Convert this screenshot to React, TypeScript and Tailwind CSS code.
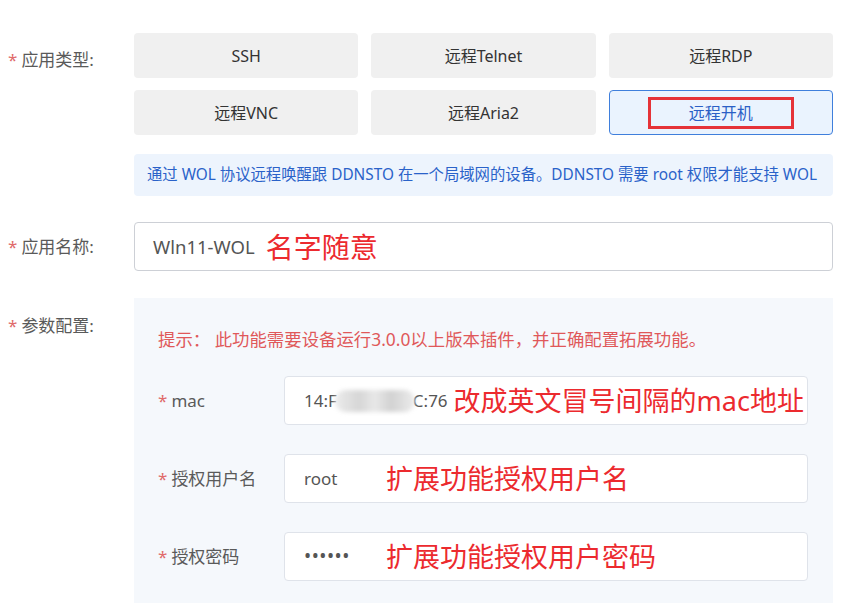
import React from 'react'

const font = { fontFamily: '"Noto Sans", "Noto Sans CJK SC", sans-serif' }

const appTypes = ['SSH', '远程Telnet', '远程RDP', '远程VNC', '远程Aria2', '远程开机']

function Label({ text }: { text: string }) {
  return (
    <span className="text-[17px] text-[#5a5a5a]">
      <span className="text-[#e06a6a] mr-[4px]">*</span>
      {text}
    </span>
  )
}

function Note({ children, className = '' }: { children: React.ReactNode; className?: string }) {
  return <span className={`text-[27px] leading-none text-[#ec2a2e] ${className}`}>{children}</span>
}

function SubRow({ label, children }: { label: string; children: React.ReactNode }) {
  return (
    <div className="flex items-center">
      <div className="w-[150px] pl-[24px] shrink-0">
        <span className="text-[17px] text-[#5a5a5a]">
          <span className="text-[#e06a6a] mr-[4px]">*</span>
          {label}
        </span>
      </div>
      <div className="flex-1 h-[49px] bg-white border border-[#dfe3ea] rounded-[4px] flex items-center pl-[19px] text-[17px] text-[#555]">
        {children}
      </div>
    </div>
  )
}

export default function App() {
  return (
    <div style={font} className="w-[849px] h-[603px] overflow-hidden bg-white pl-[8px] pr-[16px] pt-[33px]">
      {/* 应用类型 */}
      <div className="flex">
        <div className="w-[126px] shrink-0 pt-[14px]">
          <Label text="应用类型:" />
        </div>
        <div className="flex-1">
          <div className="grid grid-cols-3 gap-x-[13px] gap-y-[12px]">
            {appTypes.map((t) =>
              t === '远程开机' ? (
                <div
                  key={t}
                  className="h-[45px] rounded-[4px] border border-[#3f7fdc] bg-[#eaf3fe] flex items-center justify-center"
                >
                  <span className="w-[146px] h-[32px] border-[3px] border-[#e53238] flex items-center justify-center text-[16px] text-[#2b5fc6]">
                    {t}
                  </span>
                </div>
              ) : (
                <div
                  key={t}
                  className="h-[45px] rounded-[4px] bg-[#f0f0f0] flex items-center justify-center text-[16px] text-[#333]"
                >
                  {t}
                </div>
              )
            )}
          </div>
          <div className="mt-[19px] h-[42px] rounded-[4px] bg-[#edf4fd] flex items-center pl-[13px] text-[15.35px] text-[#2a62c9] whitespace-nowrap">
            通过 WOL 协议远程唤醒跟 DDNSTO 在一个局域网的设备。DDNSTO 需要 root 权限才能支持 WOL
          </div>
        </div>
      </div>

      {/* 应用名称 */}
      <div className="flex items-center mt-[26px]">
        <div className="w-[126px] shrink-0">
          <Label text="应用名称:" />
        </div>
        <div className="flex-1 h-[49px] rounded-[4px] border border-[#cdd0d6] flex items-center pl-[18px]">
          <span className="text-[18.5px] text-[#555]">Wln11-WOL</span>
          <Note className="ml-[11px] text-[28px]">名字随意</Note>
        </div>
      </div>

      {/* 参数配置 */}
      <div className="flex mt-[27px]">
        <div className="w-[126px] shrink-0 pt-[15px]">
          <Label text="参数配置:" />
        </div>
        <div className="flex-1 bg-[#f5f8fc] pt-[30px] pr-[25px] pb-[40px]">
          <div className="pl-[24px] text-[17.4px] leading-[22px] text-[#e0585a] whitespace-nowrap">
            提示：&nbsp;此功能需要设备运行3.0.0以上版本插件，并正确配置拓展功能。
          </div>
          <div className="mt-[26px] flex flex-col gap-[29px]">
            <SubRow label="mac">
              <span>14:F</span>
              <span className="inline-block w-[80px] h-[22px] mx-[-2px] rounded-full bg-[linear-gradient(90deg,#ececec,#d6d6d6_30%,#e8e8e8_50%,#d2d2d2_70%,#ececec)] blur-[2px]" />
              <span>C:76</span>
              <Note className="ml-[6px]">改成英文冒号间隔的mac地址</Note>
            </SubRow>
            <SubRow label="授权用户名">
              <span className="w-[82px]">root</span>
              <Note>扩展功能授权用户名</Note>
            </SubRow>
            <SubRow label="授权密码">
              <span className="w-[82px] text-[19px] tracking-[0.5px]">••••••</span>
              <Note>扩展功能授权用户密码</Note>
            </SubRow>
          </div>
        </div>
      </div>
    </div>
  )
}
